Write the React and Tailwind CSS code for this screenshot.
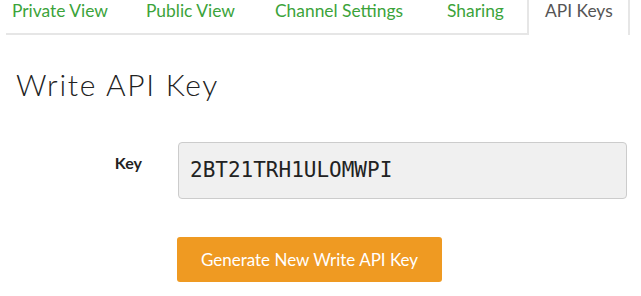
export default function App() {
  const green = "text-[#3ba33a]";
  return (
    <div className="w-[641px] h-[296px] bg-white overflow-hidden">
      <div className="flex font-['Lato',sans-serif] text-[17.4px] leading-[20px]">
        <div className="ml-[6px] w-[521px] h-[35px] border-b-2 border-[#e6e6e6] flex">
          <div className={`w-[122px] pl-[6px] pt-[1px] ${green}`}>Private View</div>
          <div className={`w-[129px] pl-[18px] pt-[1px] ${green}`}>Public View</div>
          <div className={`w-[172px] pl-[18px] pt-[1px] ${green}`}>Channel Settings</div>
          <div className={`w-[98px] pl-[18px] pt-[1px] ${green}`}>Sharing</div>
        </div>
        <div className="w-[103px] h-[35px] border-l-2 border-r-2 border-[#e6e6e6] pl-[16px] pt-[1px] text-[#555555]">
          API Keys
        </div>
      </div>

      <h1 className="mt-[31px] ml-[16px] font-['Lato',sans-serif] font-light text-[30px] leading-[36px] tracking-[1.7px] text-[#222222]">
        Write API Key
      </h1>

      <div className="mt-[40px] flex items-start">
        <div className="w-[142px] pt-[11px] text-right font-['Lato',sans-serif] font-bold text-[16px] leading-[20px] text-[#222222]">
          Key
        </div>
        <div className="ml-[36px] w-[449px] h-[57px] flex items-center bg-[#f0f0f0] border border-[#cccccc] rounded-[4px] pl-[11px] font-['DejaVu_Sans_Mono',monospace] text-[21px] text-[#222222]">
          2BT21TRH1ULOMWPI
        </div>
      </div>

      <div className="mt-[38px] ml-[177px]">
        <button className="w-[265px] h-[45px] rounded-[3px] bg-[#ef9a22] text-white font-['Lato',sans-serif] text-[17px] flex items-center justify-center">
          Generate New Write API Key
        </button>
      </div>
    </div>
  );
}
